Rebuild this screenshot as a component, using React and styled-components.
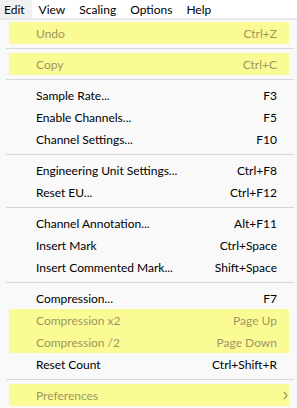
import React from "react";
import styled, { createGlobalStyle } from "styled-components";

const GlobalStyle = createGlobalStyle`
  html, body {
    margin: 0;
    padding: 0;
    background: #f9f9f9;
  }
  body {
    font-family: Lato, "Noto Sans", sans-serif;
    font-size: 12px;
  }
`;

const menus = ["Edit", "View", "Scaling", "Options", "Help"];

const items = [
  { label: "Undo", key: "Ctrl+Z", marked: true },
  { sep: true },
  { label: "Copy", key: "Ctrl+C", marked: true },
  { sep: true },
  { label: "Sample Rate...", key: "F3" },
  { label: "Enable Channels...", key: "F5" },
  { label: "Channel Settings...", key: "F10" },
  { sep: true },
  { label: "Engineering Unit Settings...", key: "Ctrl+F8" },
  { label: "Reset EU...", key: "Ctrl+F12" },
  { sep: true },
  { label: "Channel Annotation...", key: "Alt+F11" },
  { label: "Insert Mark", key: "Ctrl+Space" },
  { label: "Insert Commented Mark...", key: "Shift+Space" },
  { sep: true },
  { label: "Compression...", key: "F7" },
  { label: "Compression x2", key: "Page Up", marked: true },
  { label: "Compression /2", key: "Page Down", marked: true },
  { label: "Reset Count", key: "Ctrl+Shift+R" },
  { sep: true },
  { label: "Preferences", key: "", marked: true, submenu: true },
];

function App() {
  return (
    <Window>
      <GlobalStyle />
      <MenuBar>
        {menus.map((m, i) => (
          <BarItem key={m} open={i === 0} first={i === 0}>
            {m}
          </BarItem>
        ))}
      </MenuBar>
      <Panel>
        {items.map((it, i) =>
          it.sep ? (
            <Separator key={i} />
          ) : (
            <Row key={i} marked={it.marked}>
              <Label>{it.label}</Label>
              <Shortcut>{it.key}</Shortcut>
              <ArrowSlot>
                {it.submenu && (
                  <svg width="5" height="9" viewBox="0 0 5 9">
                    <path
                      d="M0.8 0.8 L4 4.5 L0.8 8.2"
                      fill="none"
                      stroke="currentColor"
                      strokeWidth="1.1"
                    />
                  </svg>
                )}
              </ArrowSlot>
            </Row>
          )
        )}
      </Panel>
    </Window>
  );
}

export default App;

const Window = styled.div`
  width: 297px;
  height: 408px;
  overflow: hidden;
  background: #f9f9f9;
`;

const MenuBar = styled.div`
  display: flex;
  height: 18px;
  background: #ffffff;
  color: #000;
`;

const BarItem = styled.div`
  display: flex;
  align-items: center;
  padding: 0 7px 0 ${({ first }) => (first ? "4px" : "7px")};
  background: ${({ open }) => (open ? "#f0f0f0" : "transparent")};
`;

const Panel = styled.div`
  border-top: 2px solid #e8e8e8;
  padding-top: 2px;
  background: #f9f9f9;
`;

const Row = styled.div`
  display: flex;
  align-items: center;
  height: 22px;
  margin: 0 8px 0 9px;
  padding-left: 27px;
  background: ${({ marked }) => (marked ? "#fbfb96" : "transparent")};
  color: ${({ marked }) => (marked ? "#9d975e" : "#000")};
`;

const Label = styled.span`
  flex: 1;
  white-space: nowrap;
`;

const Shortcut = styled.span`
  white-space: nowrap;
`;

const ArrowSlot = styled.span`
  display: flex;
  align-items: center;
  width: 12px;
  padding-left: 6px;
  box-sizing: border-box;
  color: #8a8a55;
`;

const Separator = styled.div`
  height: 9px;
  margin: 0 3px 0 6px;
  display: flex;
  align-items: center;

  &::after {
    content: "";
    display: block;
    width: 100%;
    height: 1px;
    background: #d7d7d7;
  }
`;
